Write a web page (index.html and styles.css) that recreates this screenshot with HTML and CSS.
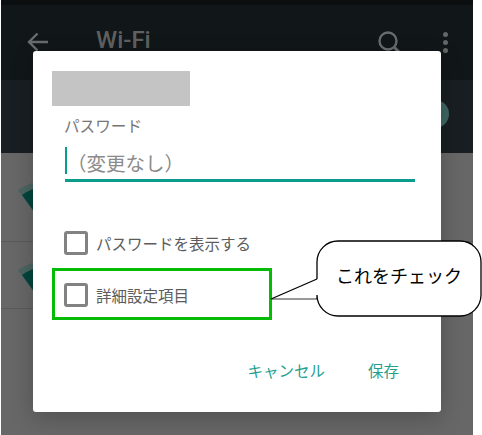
FILE: index.html
```html
<!DOCTYPE html>
<html lang="ja">
<head>
<meta charset="utf-8">
<title>Wi-Fi</title>
<link rel="stylesheet" href="styles.css">
</head>
<body>
<div class="page">
  <div class="screen">
    <div class="status"></div>
    <header class="appbar">
      <svg class="back" viewBox="0 0 22 20" width="22" height="20"><path d="M21 10H2M10.500 1.500 2 10l8.500 8.500" fill="none" stroke="#696c6d" stroke-width="2.400"/></svg>
      <span class="title">Wi-Fi</span>
      <svg class="search" viewBox="0 0 26 26" width="26" height="26"><circle cx="10" cy="10" r="8.500" fill="none" stroke="#696c6d" stroke-width="2.400"/><path d="M16 16 25 25" stroke="#696c6d" stroke-width="2.800"/></svg>
      <div class="more"><i></i><i></i><i></i></div>
    </header>
    <div class="band"><span class="knob"></span></div>
    <div class="row row-first">
      <svg class="wifi" viewBox="0 0 58 47" width="58" height="47"><path d="M2 10A45.800 45.800 0 0 1 56 10L29 47Z" fill="#4c6461"/><path d="M6 15A39.400 39.400 0 0 1 52 15L29 47Z" fill="#00453d"/></svg>
    </div>
    <div class="row row-second">
      <svg class="wifi" viewBox="0 0 58 47" width="58" height="47"><path d="M2 10A45.800 45.800 0 0 1 56 10L29 47Z" fill="#4c6461"/><path d="M6 15A39.400 39.400 0 0 1 52 15L29 47Z" fill="#00453d"/></svg>
    </div>
  </div>

  <section class="dialog">
    <div class="redacted"></div>
    <div class="label">パスワード</div>
    <div class="input"><span class="caret"></span><span class="placeholder">（変更なし）</span></div>
    <div class="check check-plain"><span class="box"></span><span>パスワードを表示する</span></div>
    <div class="check check-marked"><span class="box"></span><span>詳細設定項目</span></div>
    <div class="actions"><span>キャンセル</span><span>保存</span></div>
  </section>

  <div class="callout">
    <svg class="callout-shape" viewBox="0 0 212 78" width="212" height="78">
      <path d="M68 1H190a21 21 0 0 1 21 21V55a21 21 0 0 1-21 21H68a21 21 0 0 1-21-21V59H1L47 39V22a21 21 0 0 1 21-21Z" fill="#fff"/>
      <line x1="1" y1="59" x2="47" y2="59" stroke="#777" stroke-width="1.600"/>
      <line x1="1" y1="59" x2="47" y2="39" stroke="#000" stroke-width="1.300"/>
      <path d="M47 39V22a21 21 0 0 1 21-21H190a21 21 0 0 1 21 21V55a21 21 0 0 1-21 21H68a21 21 0 0 1-21-21V59" fill="none" stroke="#000" stroke-width="1.300"/>
    </svg>
    <span class="callout-text">これをチェック</span>
  </div>
</div>
</body>
</html>
```
FILE: styles.css
```css
* { box-sizing: border-box; }
html, body { margin: 0; background: #fff; }
body { font-family: "Noto Sans CJK JP", "Noto Sans", sans-serif; }

.page { position: relative; width: 482px; height: 435px; overflow: hidden; }

.screen {
  margin-left: 1px;
  width: 472px;
  height: 435px;
  display: flex;
  flex-direction: column;
  background: #676767;
  overflow: hidden;
}
.status { height: 5px; background: #0c0f10; }
.appbar {
  height: 75px;
  background: #111618;
  display: flex;
  align-items: flex-start;
  padding: 0 25px 0 26px;
}
.back { flex: none; margin-top: 27px; }
.title {
  flex: none;
  margin: 17px 0 0 47px;
  font: 500 24px/36px Roboto, sans-serif;
  color: #5e6061;
  white-space: nowrap;
}
.search { flex: none; margin: 26px 0 0 auto; }
.more {
  flex: none;
  margin: 27px 0 0 39px;
  display: flex;
  flex-direction: column;
  gap: 3px;
}
.more i { display: block; width: 5px; height: 5px; border-radius: 50%; background: #646667; }
.band {
  height: 73px;
  background: #191e22;
  display: flex;
  justify-content: flex-end;
  padding: 20px 24px 0 0;
}
.knob { width: 28px; height: 28px; border-radius: 50%; background: #3f6662; }
.row { padding-left: 15px; border-bottom: 1px solid #5a5a5a; }
.row-first { height: 89px; padding-top: 27px; }
.row-second { height: 67px; padding-top: 18px; }
.wifi { display: block; }

.dialog {
  position: absolute;
  left: 33px;
  top: 51px;
  width: 408px;
  height: 361px;
  padding: 20px 26px 0 32px;
  background: #fff;
  border-radius: 3px;
  box-shadow: 0 6px 22px rgba(0, 0, 0, .22);
  display: flex;
  flex-direction: column;
}
.redacted { margin-left: -13px; width: 138px; height: 35px; background: #c4c4c4; }
.label { margin-top: 8px; margin-left: -1px; font-size: 15.600px; line-height: 22px; color: #757575; }
.input {
  margin-top: 11px;
  height: 35px;
  border-bottom: 3px solid #0a9c8c;
  display: flex;
  align-items: flex-start;
}
.caret { width: 2px; height: 27px; background: #0a9c8c; }
.placeholder { margin-top: 2px; font-size: 19.500px; line-height: 27px; color: #8b8b8b; }
.check {
  display: flex;
  align-items: center;
  gap: 8px;
  font-size: 15.500px;
  color: #5c5c5c;
}
.check-plain { margin: 47px 0 0 -1px; height: 27px; }
.box { width: 24px; height: 24px; flex: none; border: 3px solid #828282; border-radius: 3px; background: #fff; }
.check-marked {
  margin: 12px 0 0 -13px;
  width: 220px;
  height: 52px;
  padding: 2px 0 0 9px;
  border: 3px solid #06bb06;
}
.actions {
  margin-top: 38px;
  display: flex;
  justify-content: flex-end;
  gap: 43px;
  padding-right: 16px;
  font-size: 15.500px;
  line-height: 24px;
  color: #1f9f91;
}

.callout { position: absolute; left: 270px; top: 240px; width: 212px; height: 78px; }
.callout-shape { display: block; }
.callout-text {
  position: absolute;
  left: 66px;
  top: 21px;
  font-size: 18px;
  line-height: 28px;
  color: #000;
  white-space: nowrap;
}
```
